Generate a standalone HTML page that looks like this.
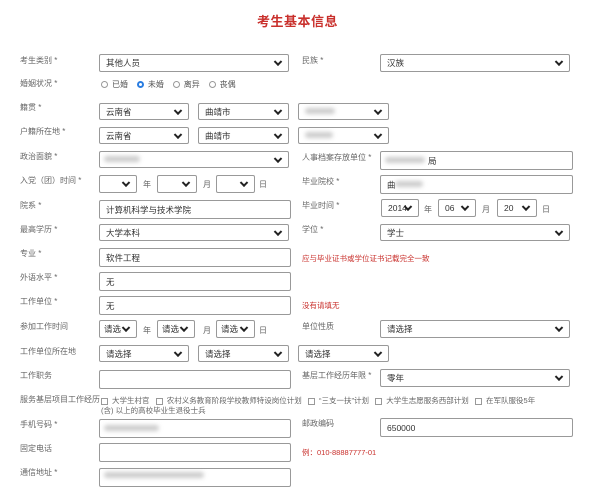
<!DOCTYPE html>
<html><head><meta charset="utf-8"><style>
*{margin:0;padding:0;box-sizing:border-box}
body{width:600px;height:480px;background:#fff;position:relative;overflow:hidden;font-family:"Liberation Sans","Noto Sans CJK SC",sans-serif;color:#555;font-size:8px}
.a{position:absolute;white-space:nowrap}
.t{left:257px;top:11px;font-size:13px;font-weight:bold;color:#c9302c;letter-spacing:0.5px}
.l{font-size:8px;color:#666}
.b{border:1px solid #999;border-radius:2px;background:#fff;font-size:8.5px;color:#333;padding-left:6px;display:flex;align-items:center;overflow:hidden}
.s::after{content:"";position:absolute;right:7px;top:50%;width:4px;height:4px;border-right:2px solid #222;border-bottom:2px solid #222;transform:translateY(-70%) rotate(45deg)}
.r{color:#c9302c;font-size:7.5px}
.bl{position:absolute;background:#ccc;filter:blur(2px);height:6px;border-radius:3px}
.rad{display:inline-block;width:7px;height:7px;border:1px solid #999;border-radius:50%;vertical-align:middle;margin-right:4px}
.cb{display:inline-block;width:7px;height:7px;border:1px solid #999;vertical-align:middle;margin-right:4px}
</style></head><body>
<div class="a t">考生基本信息</div>

<div class="a l" style="left:20px;top:55px">考生类别 *</div>
<div class="a b s" style="left:99px;top:54px;width:190px;height:18px">其他人员</div>
<div class="a l" style="left:302px;top:55px">民族 *</div>
<div class="a b s" style="left:380px;top:54px;width:190px;height:18px">汉族</div>

<div class="a l" style="left:20px;top:78px">婚姻状况 *</div>
<div class="a l" style="left:101px;top:79px;color:#555"><span class="rad"></span>已婚&nbsp;&nbsp;&nbsp;&nbsp;<span class="rad" style="border:2.5px solid #2a7de1"></span>未婚&nbsp;&nbsp;&nbsp;&nbsp;<span class="rad"></span>离异&nbsp;&nbsp;&nbsp;&nbsp;<span class="rad"></span>丧偶</div>

<div class="a l" style="left:20px;top:102px">籍贯 *</div>
<div class="a b s" style="left:99px;top:103px;width:90px;height:17px">云南省</div>
<div class="a b s" style="left:198px;top:103px;width:91px;height:17px">曲靖市</div>
<div class="a b s" style="left:298px;top:103px;width:91px;height:17px"></div>
<div class="bl" style="left:305px;top:108px;width:30px"></div>

<div class="a l" style="left:20px;top:126px">户籍所在地 *</div>
<div class="a b s" style="left:99px;top:127px;width:90px;height:17px">云南省</div>
<div class="a b s" style="left:198px;top:127px;width:91px;height:17px">曲靖市</div>
<div class="a b s" style="left:298px;top:127px;width:91px;height:17px"></div>
<div class="bl" style="left:305px;top:132px;width:28px"></div>

<div class="a l" style="left:20px;top:151px">政治面貌 *</div>
<div class="a b s" style="left:99px;top:151px;width:190px;height:17px"></div>
<div class="bl" style="left:104px;top:156px;width:36px"></div>
<div class="a l" style="left:302px;top:152px">人事档案存放单位 *</div>
<div class="a b" style="left:380px;top:151px;width:193px;height:19px"></div>
<div class="bl" style="left:385px;top:157px;width:40px"></div>
<div class="a" style="left:428px;top:155px;color:#333;font-size:8.5px">局</div>

<div class="a l" style="left:20px;top:175px">入党（团）时间 *</div>
<div class="a b s" style="left:99px;top:175px;width:38px;height:18px"></div>
<div class="a l" style="left:143px;top:179px">年</div>
<div class="a b s" style="left:157px;top:175px;width:40px;height:18px"></div>
<div class="a l" style="left:203px;top:179px">月</div>
<div class="a b s" style="left:216px;top:175px;width:39px;height:18px"></div>
<div class="a l" style="left:259px;top:179px">日</div>
<div class="a l" style="left:302px;top:176px">毕业院校 *</div>
<div class="a b" style="left:380px;top:175px;width:193px;height:19px">曲</div>
<div class="bl" style="left:395px;top:181px;width:28px"></div>

<div class="a l" style="left:20px;top:200px">院系 *</div>
<div class="a b" style="left:99px;top:200px;width:192px;height:19px">计算机科学与技术学院</div>
<div class="a l" style="left:302px;top:200px">毕业时间 *</div>
<div class="a b s" style="left:381px;top:199px;width:38px;height:18px">2014</div>
<div class="a l" style="left:424px;top:204px">年</div>
<div class="a b s" style="left:438px;top:199px;width:38px;height:18px">06</div>
<div class="a l" style="left:482px;top:204px">月</div>
<div class="a b s" style="left:497px;top:199px;width:40px;height:18px">20</div>
<div class="a l" style="left:542px;top:204px">日</div>

<div class="a l" style="left:20px;top:224px">最高学历 *</div>
<div class="a b s" style="left:99px;top:224px;width:190px;height:17px">大学本科</div>
<div class="a l" style="left:302px;top:224px">学位 *</div>
<div class="a b s" style="left:380px;top:224px;width:190px;height:17px">学士</div>

<div class="a l" style="left:20px;top:248px">专业 *</div>
<div class="a b" style="left:99px;top:248px;width:192px;height:19px">软件工程</div>
<div class="a r" style="left:302px;top:253px">应与毕业证书或学位证书记载完全一致</div>

<div class="a l" style="left:20px;top:272px">外语水平 *</div>
<div class="a b" style="left:99px;top:272px;width:192px;height:19px">无</div>

<div class="a l" style="left:20px;top:296px">工作单位 *</div>
<div class="a b" style="left:99px;top:296px;width:192px;height:19px">无</div>
<div class="a r" style="left:302px;top:300px">没有请填无</div>

<div class="a l" style="left:20px;top:321px">参加工作时间</div>
<div class="a b s" style="left:99px;top:320px;width:38px;height:18px;padding-left:4px">请选<span style="display:inline-block;width:0"></span></div>
<div class="a l" style="left:143px;top:325px">年</div>
<div class="a b s" style="left:157px;top:320px;width:38px;height:18px;padding-left:4px">请选</div>
<div class="a l" style="left:203px;top:325px">月</div>
<div class="a b s" style="left:216px;top:320px;width:39px;height:18px;padding-left:4px">请选</div>
<div class="a l" style="left:259px;top:325px">日</div>
<div class="a l" style="left:302px;top:321px">单位性质</div>
<div class="a b s" style="left:380px;top:320px;width:190px;height:18px">请选择</div>

<div class="a l" style="left:20px;top:346px">工作单位所在地</div>
<div class="a b s" style="left:99px;top:345px;width:90px;height:17px">请选择</div>
<div class="a b s" style="left:198px;top:345px;width:91px;height:17px">请选择</div>
<div class="a b s" style="left:298px;top:345px;width:91px;height:17px">请选择</div>

<div class="a l" style="left:20px;top:370px">工作职务</div>
<div class="a b" style="left:99px;top:370px;width:192px;height:19px"></div>
<div class="a l" style="left:302px;top:370px">基层工作经历年限 *</div>
<div class="a b s" style="left:380px;top:369px;width:190px;height:18px">零年</div>

<div class="a l" style="left:20px;top:394px">服务基层项目工作经历</div>
<div class="a l" style="left:101px;top:395px;font-size:7.5px"><span class="cb"></span>大学生村官&nbsp;&nbsp;&nbsp;<span class="cb"></span>农村义务教育阶段学校教师特设岗位计划&nbsp;&nbsp;&nbsp;<span class="cb"></span>“三支一扶”计划&nbsp;&nbsp;&nbsp;<span class="cb"></span>大学生志愿服务西部计划&nbsp;&nbsp;&nbsp;<span class="cb"></span>在军队服役5年</div>
<div class="a l" style="left:101px;top:405px;font-size:7.5px">(含) 以上的高校毕业生退役士兵</div>

<div class="a l" style="left:20px;top:419px">手机号码 *</div>
<div class="a b" style="left:99px;top:419px;width:192px;height:19px"></div>
<div class="bl" style="left:104px;top:425px;width:55px"></div>
<div class="a l" style="left:302px;top:418px">邮政编码</div>
<div class="a b" style="left:380px;top:418px;width:193px;height:19px">650000</div>

<div class="a l" style="left:20px;top:443px">固定电话</div>
<div class="a b" style="left:99px;top:443px;width:192px;height:19px"></div>
<div class="a r" style="left:302px;top:447px">例：010-88887777-01</div>

<div class="a l" style="left:20px;top:467px">通信地址 *</div>
<div class="a b" style="left:99px;top:468px;width:192px;height:19px"></div>
<div class="bl" style="left:104px;top:472px;width:100px"></div>
</body></html>
